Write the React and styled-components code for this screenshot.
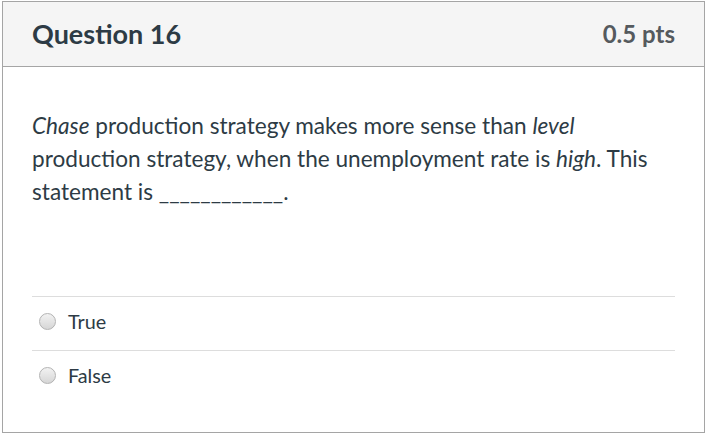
import React from 'react';
import styled, { createGlobalStyle } from 'styled-components';

const GlobalStyle = createGlobalStyle`
  html, body {
    margin: 0;
    padding: 0;
    background: #fff;
  }
  body {
    font-family: Lato, "Open Sans", sans-serif;
    color: #2d3b45;
  }
`;

const answers = ['True', 'False'];

const App = () => {
  return (
    <Page>
      <GlobalStyle />
      <Card>
        <Header>
          <Title>Question 16</Title>
          <Points>0.5 pts</Points>
        </Header>
        <Body>
          <QuestionText>
            <em>Chase</em> production strategy makes more sense than <em>level</em>{' '}
            production strategy, when the unemployment rate is <em>high</em>. This
            statement is ____________.
          </QuestionText>
          <Answers>
            {answers.map((a) => (
              <Answer key={a}>
                <Radio />
                <Label>{a}</Label>
              </Answer>
            ))}
          </Answers>
        </Body>
      </Card>
    </Page>
  );
};

export default App;

const Page = styled.div`
  padding: 1px 3px 0 2px;
  width: 708px;
  box-sizing: border-box;
`;

const Card = styled.div`
  border: 1px solid #a5a5a5;
  box-sizing: border-box;
  height: 432px;
  display: flex;
  flex-direction: column;
`;

const Header = styled.div`
  height: 65px;
  box-sizing: border-box;
  background: #f5f5f5;
  border-bottom: 1px solid #a5a5a5;
  display: flex;
  align-items: center;
  justify-content: space-between;
  padding: 0 29px 2px 29px;
`;

const Title = styled.h2`
  margin: 0;
  font-size: 27px;
  font-weight: 700;
  color: #2d3b45;
`;

const Points = styled.div`
  font-size: 24px;
  font-weight: 700;
  color: #555a5e;
`;

const Body = styled.div`
  padding: 42px 29px 0 29px;
`;

const QuestionText = styled.p`
  margin: 0;
  font-size: 22.6px;
  line-height: 33px;
  color: #2d3b45;
  em {
    font-style: italic;
  }
`;

const Answers = styled.div`
  margin-top: 88px;
`;

const Answer = styled.div`
  display: flex;
  align-items: center;
  height: 54px;
  border-top: 1px solid #dddddd;
  box-sizing: border-box;
  padding: 0 0 6px 7px;
`;

const Radio = styled.span`
  width: 15px;
  height: 15px;
  border-radius: 50%;
  border: 1px solid #b3b3b3;
  background: linear-gradient(#f2f2f2, #d6d6d6);
  margin: 2px 12px 0 0;
  flex-shrink: 0;
`;

const Label = styled.span`
  font-size: 19.8px;
  color: #2d3b45;
`;
